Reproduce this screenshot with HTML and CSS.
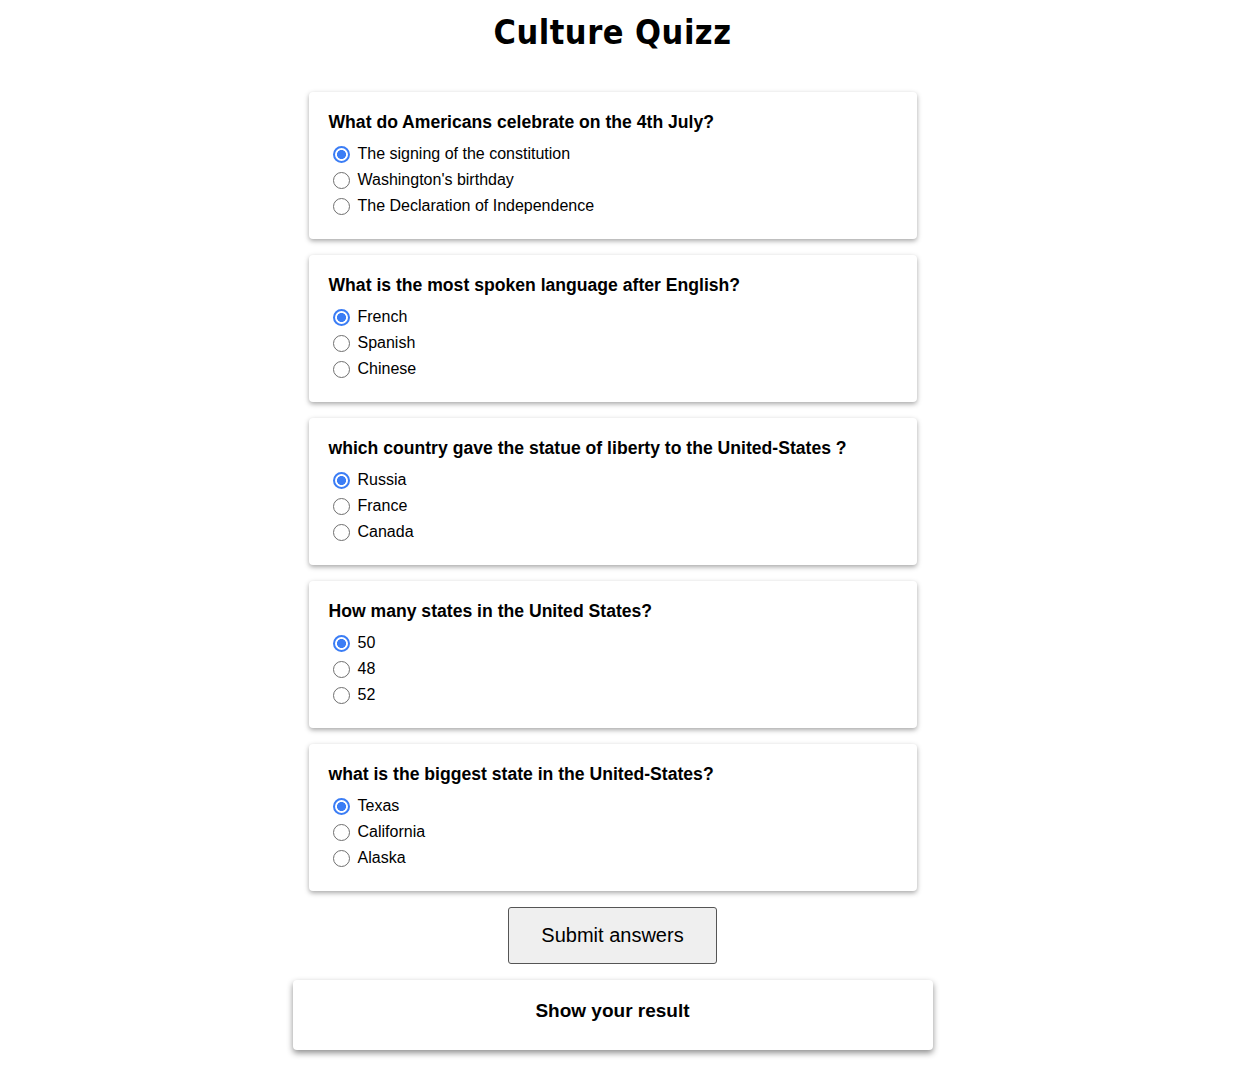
FILE: index.html
```html
<!DOCTYPE html>
<html lang="en">
<head>
<meta charset="utf-8">
<title>Culture Quizz</title>
<link rel="stylesheet" href="styles.css">
</head>
<body>
<div class="page">
  <h1 class="title">Culture Quizz</h1>
  <form class="quiz">
    <div class="card">
      <h3 class="question">What do Americans celebrate on the 4th July?</h3>
      <label class="option"><input type="radio" name="q1" checked><span>The signing of the constitution</span></label>
      <label class="option"><input type="radio" name="q1"><span>Washington's birthday</span></label>
      <label class="option"><input type="radio" name="q1"><span>The Declaration of Independence</span></label>
    </div>
    <div class="card">
      <h3 class="question">What is the most spoken language after English?</h3>
      <label class="option"><input type="radio" name="q2" checked><span>French</span></label>
      <label class="option"><input type="radio" name="q2"><span>Spanish</span></label>
      <label class="option"><input type="radio" name="q2"><span>Chinese</span></label>
    </div>
    <div class="card">
      <h3 class="question">which country gave the statue of liberty to the United-States ?</h3>
      <label class="option"><input type="radio" name="q3" checked><span>Russia</span></label>
      <label class="option"><input type="radio" name="q3"><span>France</span></label>
      <label class="option"><input type="radio" name="q3"><span>Canada</span></label>
    </div>
    <div class="card">
      <h3 class="question">How many states in the United States?</h3>
      <label class="option"><input type="radio" name="q4" checked><span>50</span></label>
      <label class="option"><input type="radio" name="q4"><span>48</span></label>
      <label class="option"><input type="radio" name="q4"><span>52</span></label>
    </div>
    <div class="card">
      <h3 class="question">what is the biggest state in the United-States?</h3>
      <label class="option"><input type="radio" name="q5" checked><span>Texas</span></label>
      <label class="option"><input type="radio" name="q5"><span>California</span></label>
      <label class="option"><input type="radio" name="q5"><span>Alaska</span></label>
    </div>
    <button type="button" class="submit">Submit answers</button>
  </form>
  <div class="result">
    <h2 class="result-title">Show your result</h2>
  </div>
</div>
</body>
</html>
```
FILE: styles.css
```css
* { box-sizing: border-box; }
html, body { margin: 0; padding: 0; background: #fff; }
body {
  font-family: "Liberation Sans", Arial, sans-serif;
  color: #000;
}
.page {
  width: 1225px;
  padding-bottom: 30px;
  display: flex;
  flex-direction: column;
  align-items: center;
}
.title {
  margin: 12px 0 0;
  height: 80px;
  font-family: "DejaVu Sans Condensed", "DejaVu Sans", sans-serif;
  font-stretch: condensed;
  font-weight: 900;
  font-size: 34px;
  line-height: 40px;
  letter-spacing: 0.5px;
}
.quiz {
  display: flex;
  flex-direction: column;
  align-items: center;
  gap: 16px;
}
.card {
  width: 608px;
  height: 147px;
  padding: 20px 20px 0;
  background: #fff;
  border-radius: 4px;
  box-shadow: 0 2px 5px rgba(0, 0, 0, 0.35);
  display: flex;
  flex-direction: column;
}
.question {
  margin: 0 0 9px;
  font-size: 17.6px;
  line-height: 20px;
  font-weight: bold;
}
.option {
  display: flex;
  align-items: center;
  height: 26px;
  font-size: 16px;
  padding-left: 4px;
}
.option input {
  appearance: none;
  -webkit-appearance: none;
  margin: 0 8px 0 0;
  width: 17px;
  height: 17px;
  border: 1px solid #6f6f6f;
  border-radius: 50%;
  background: #fff;
  flex: none;
}
.option input:checked {
  border: 2px solid #3b7df5;
  background: radial-gradient(circle, #3b7df5 0 4.2px, #fff 4.8px);
}
.submit {
  width: 209px;
  height: 57px;
  background: #efefef;
  border: 1px solid #555;
  border-radius: 3px;
  font-family: "Liberation Sans", Arial, sans-serif;
  font-size: 20px;
  color: #000;
  padding: 0;
}
.result {
  margin-top: 16px;
  width: 640px;
  height: 70px;
  background: #fff;
  border-radius: 4px;
  box-shadow: 0 3px 6px rgba(0, 0, 0, 0.45);
  display: flex;
  justify-content: center;
  padding-top: 20px;
}
.result-title {
  margin: 0;
  font-size: 19px;
  line-height: 22px;
  font-weight: bold;
}
```
